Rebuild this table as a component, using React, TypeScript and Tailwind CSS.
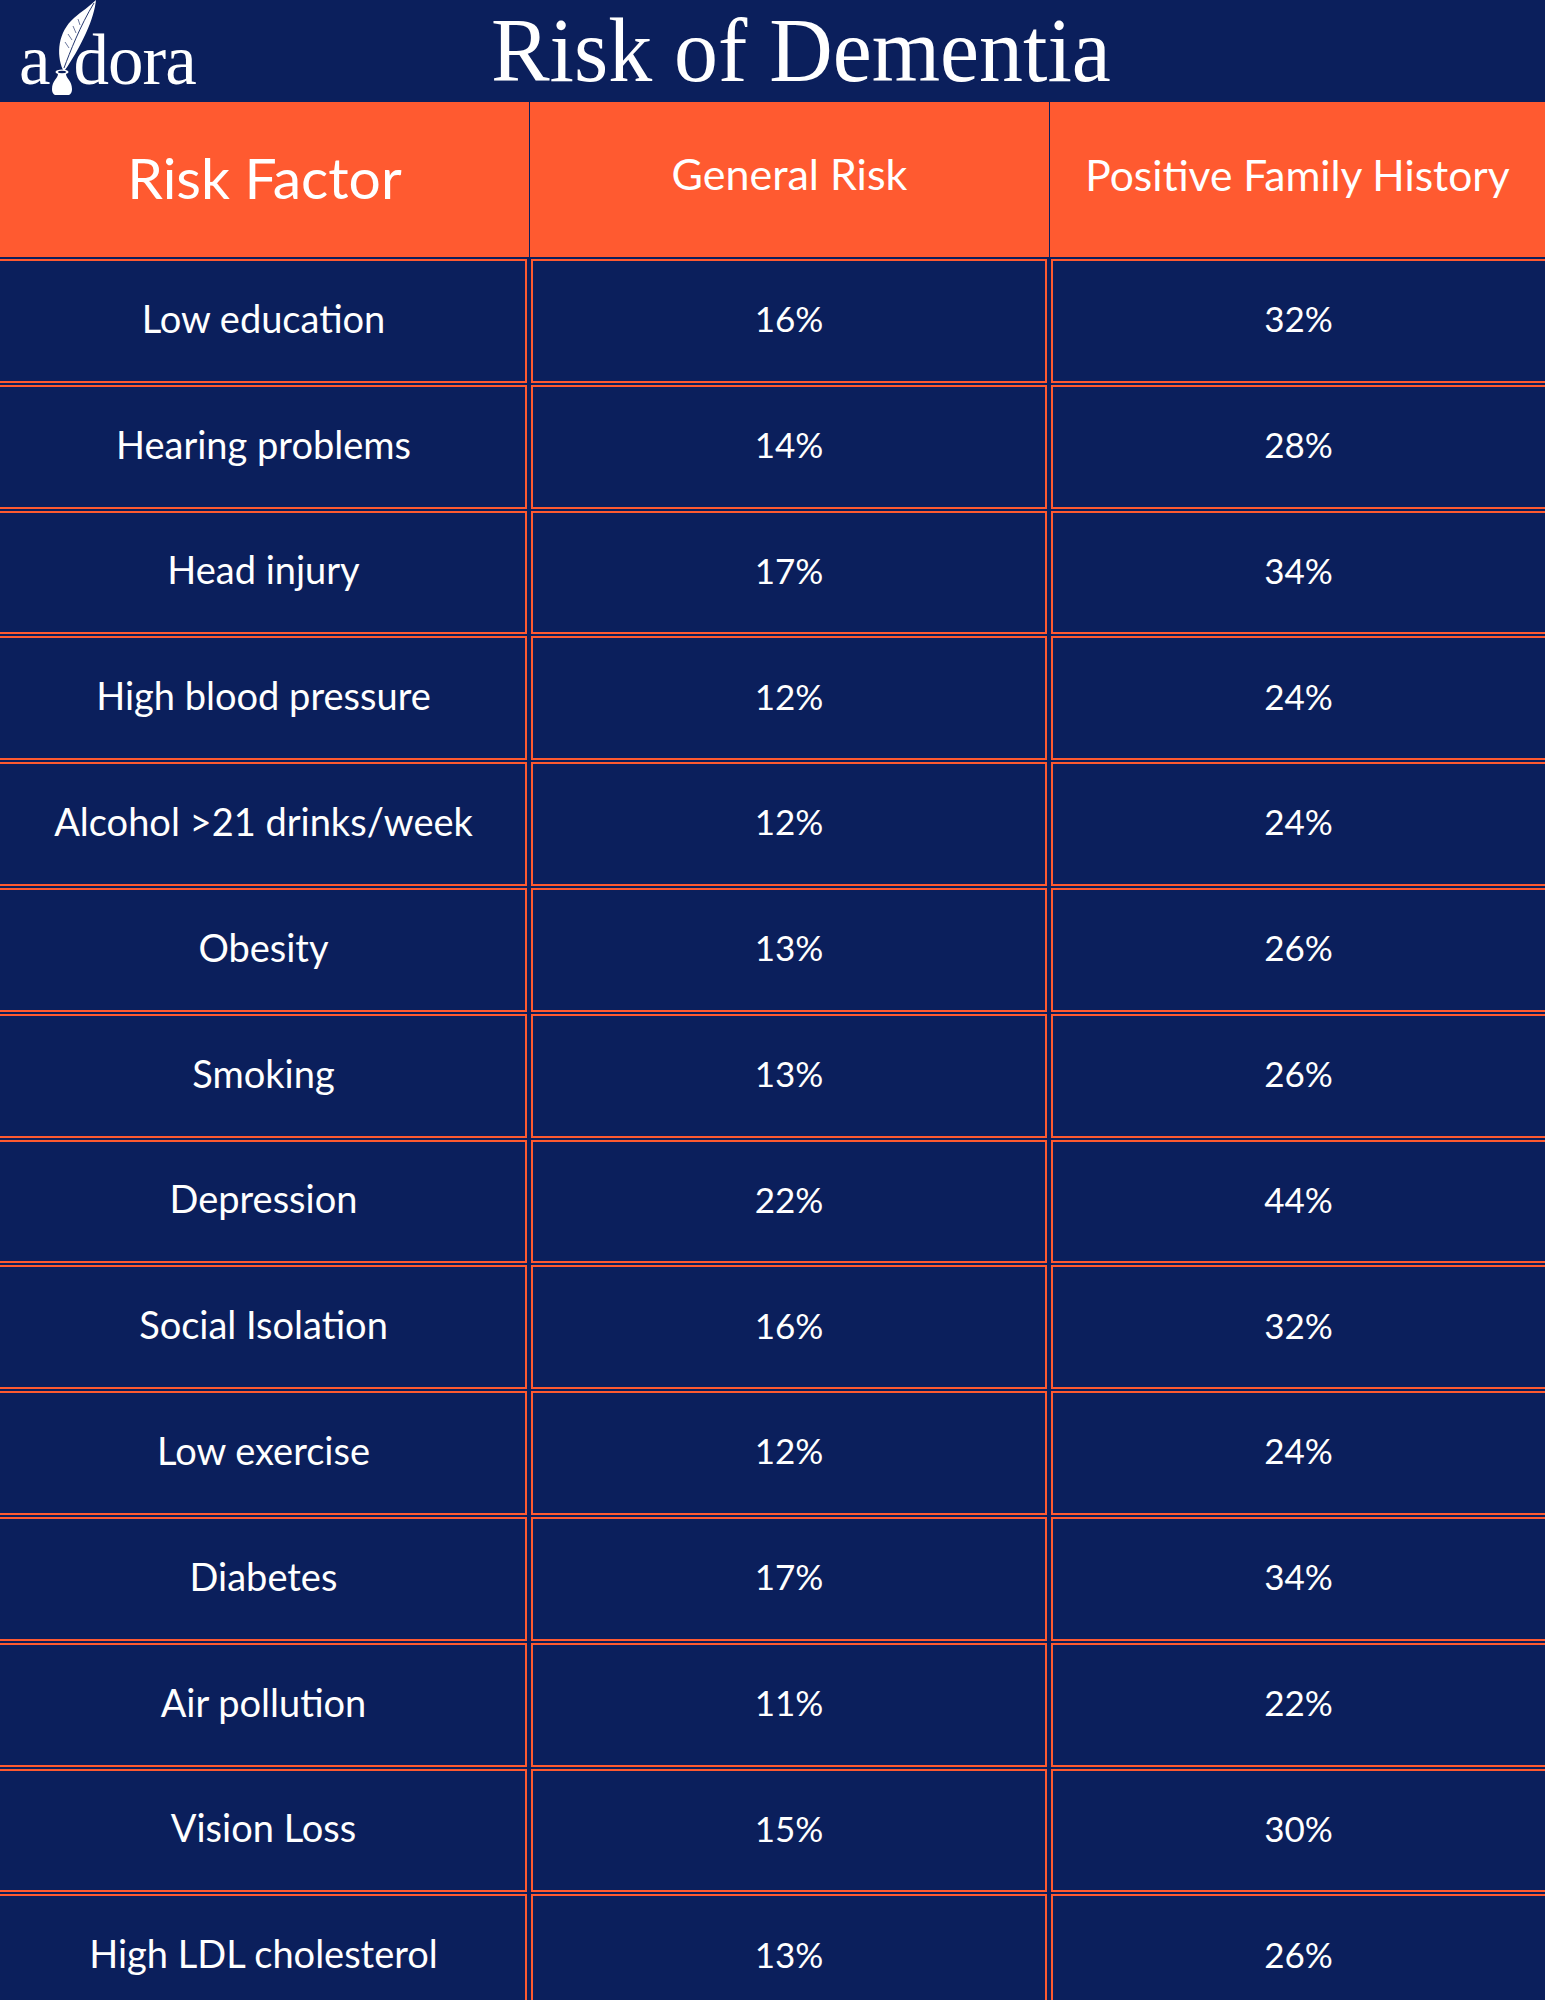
import React from "react";

const rows: [string, string, string][] = [
  ["Low education", "16%", "32%"],
  ["Hearing problems", "14%", "28%"],
  ["Head injury", "17%", "34%"],
  ["High blood pressure", "12%", "24%"],
  ["Alcohol >21 drinks/week", "12%", "24%"],
  ["Obesity", "13%", "26%"],
  ["Smoking", "13%", "26%"],
  ["Depression", "22%", "44%"],
  ["Social Isolation", "16%", "32%"],
  ["Low exercise", "12%", "24%"],
  ["Diabetes", "17%", "34%"],
  ["Air pollution", "11%", "22%"],
  ["Vision Loss", "15%", "30%"],
  ["High LDL cholesterol", "13%", "26%"],
];

function Quill() {
  return (
    <svg width="24" height="88" viewBox="0 0 24 88" className="overflow-visible shrink-0" aria-hidden>
      <path
        d="M13 62 C 6 46, 8 24, 24 10 C 32 3, 40 -2, 46 -8 C 45 1, 42 12, 36 25 C 29 40, 22 52, 15 62 Z"
        fill="#ffffff"
      />
      <path d="M14 60 C 20 44, 30 18, 44 -5" stroke="#0b1f5c" strokeWidth="0.9" fill="none" />
      <path d="M19 40 L 15 34 M22 32 L 18 26 M26 25 L 23 18 M30 17 L 28 11" stroke="#0b1f5c" strokeWidth="0.6" fill="none" />
      <ellipse cx="12" cy="64" rx="6.5" ry="2.4" fill="#ffffff" />
      <ellipse cx="12" cy="64" rx="4" ry="1.2" fill="#0b1f5c" />
      <path
        d="M8 66 L16 66 C16 70, 22 73, 22 81 C22 85, 20 87, 18 87 L6 87 C4 87, 2 85, 2 81 C2 73, 8 70, 8 66 Z"
        fill="#ffffff"
      />
    </svg>
  );
}

export default function App() {
  return (
    <div className="w-[1545px] h-[2000px] overflow-hidden bg-[#0b1f5c] text-white">
      {/* Top bar */}
      <div className="h-[102px] flex items-start">
        <div
          className="ml-[19px] h-[102px] flex items-end pb-[6px] text-[71px] leading-none tracking-[-1px] w-[200px]"
          style={{ fontFamily: '"Liberation Serif", "DejaVu Serif", serif' }}
        >
          <span>a</span>
          <Quill />
          <span>dora</span>
        </div>
        <div
          className="ml-[272px] text-[92px] leading-[1.1] origin-left scale-x-[0.955] whitespace-nowrap"
          style={{ fontFamily: '"Liberation Serif", "DejaVu Serif", serif' }}
        >
          Risk of Dementia
        </div>
      </div>

      {/* Header row */}
      <div
        className="grid grid-cols-[529px_519px_1fr] gap-x-px h-[155px] bg-[#0b1f5c]"
        style={{ fontFamily: 'Lato, "Open Sans", sans-serif' }}
      >
        <div className="bg-[#ff5a30] flex items-center justify-center text-[57px] pb-[4px]">Risk Factor</div>
        <div className="bg-[#ff5a30] flex items-center justify-center text-[43px] pb-[10px]">General Risk</div>
        <div className="bg-[#ff5a30] flex items-center justify-center text-[42.5px] pb-[10px]">Positive Family History</div>
      </div>

      {/* Body */}
      <div
        className="mt-[2px] -ml-[3px] w-[1553px] grid grid-cols-[530px_516px_1fr] gap-x-[4px] gap-y-[2px]"
        style={{ fontFamily: 'Lato, "Open Sans", sans-serif' }}
      >
        {rows.map(([f, g, p]) => (
          <React.Fragment key={f}>
            <div className="h-[123.8px] border-2 border-[#ff5a30] flex items-center justify-center text-[38px] pl-[3px] pb-[5px]">
              {f}
            </div>
            <div className="h-[123.8px] border-2 border-[#ff5a30] flex items-center justify-center text-[35px] pb-[5px]">
              {g}
            </div>
            <div className="h-[123.8px] border-2 border-[#ff5a30] flex items-center justify-center text-[35px] pr-[4px] pb-[5px]">
              {p}
            </div>
          </React.Fragment>
        ))}
      </div>
    </div>
  );
}
